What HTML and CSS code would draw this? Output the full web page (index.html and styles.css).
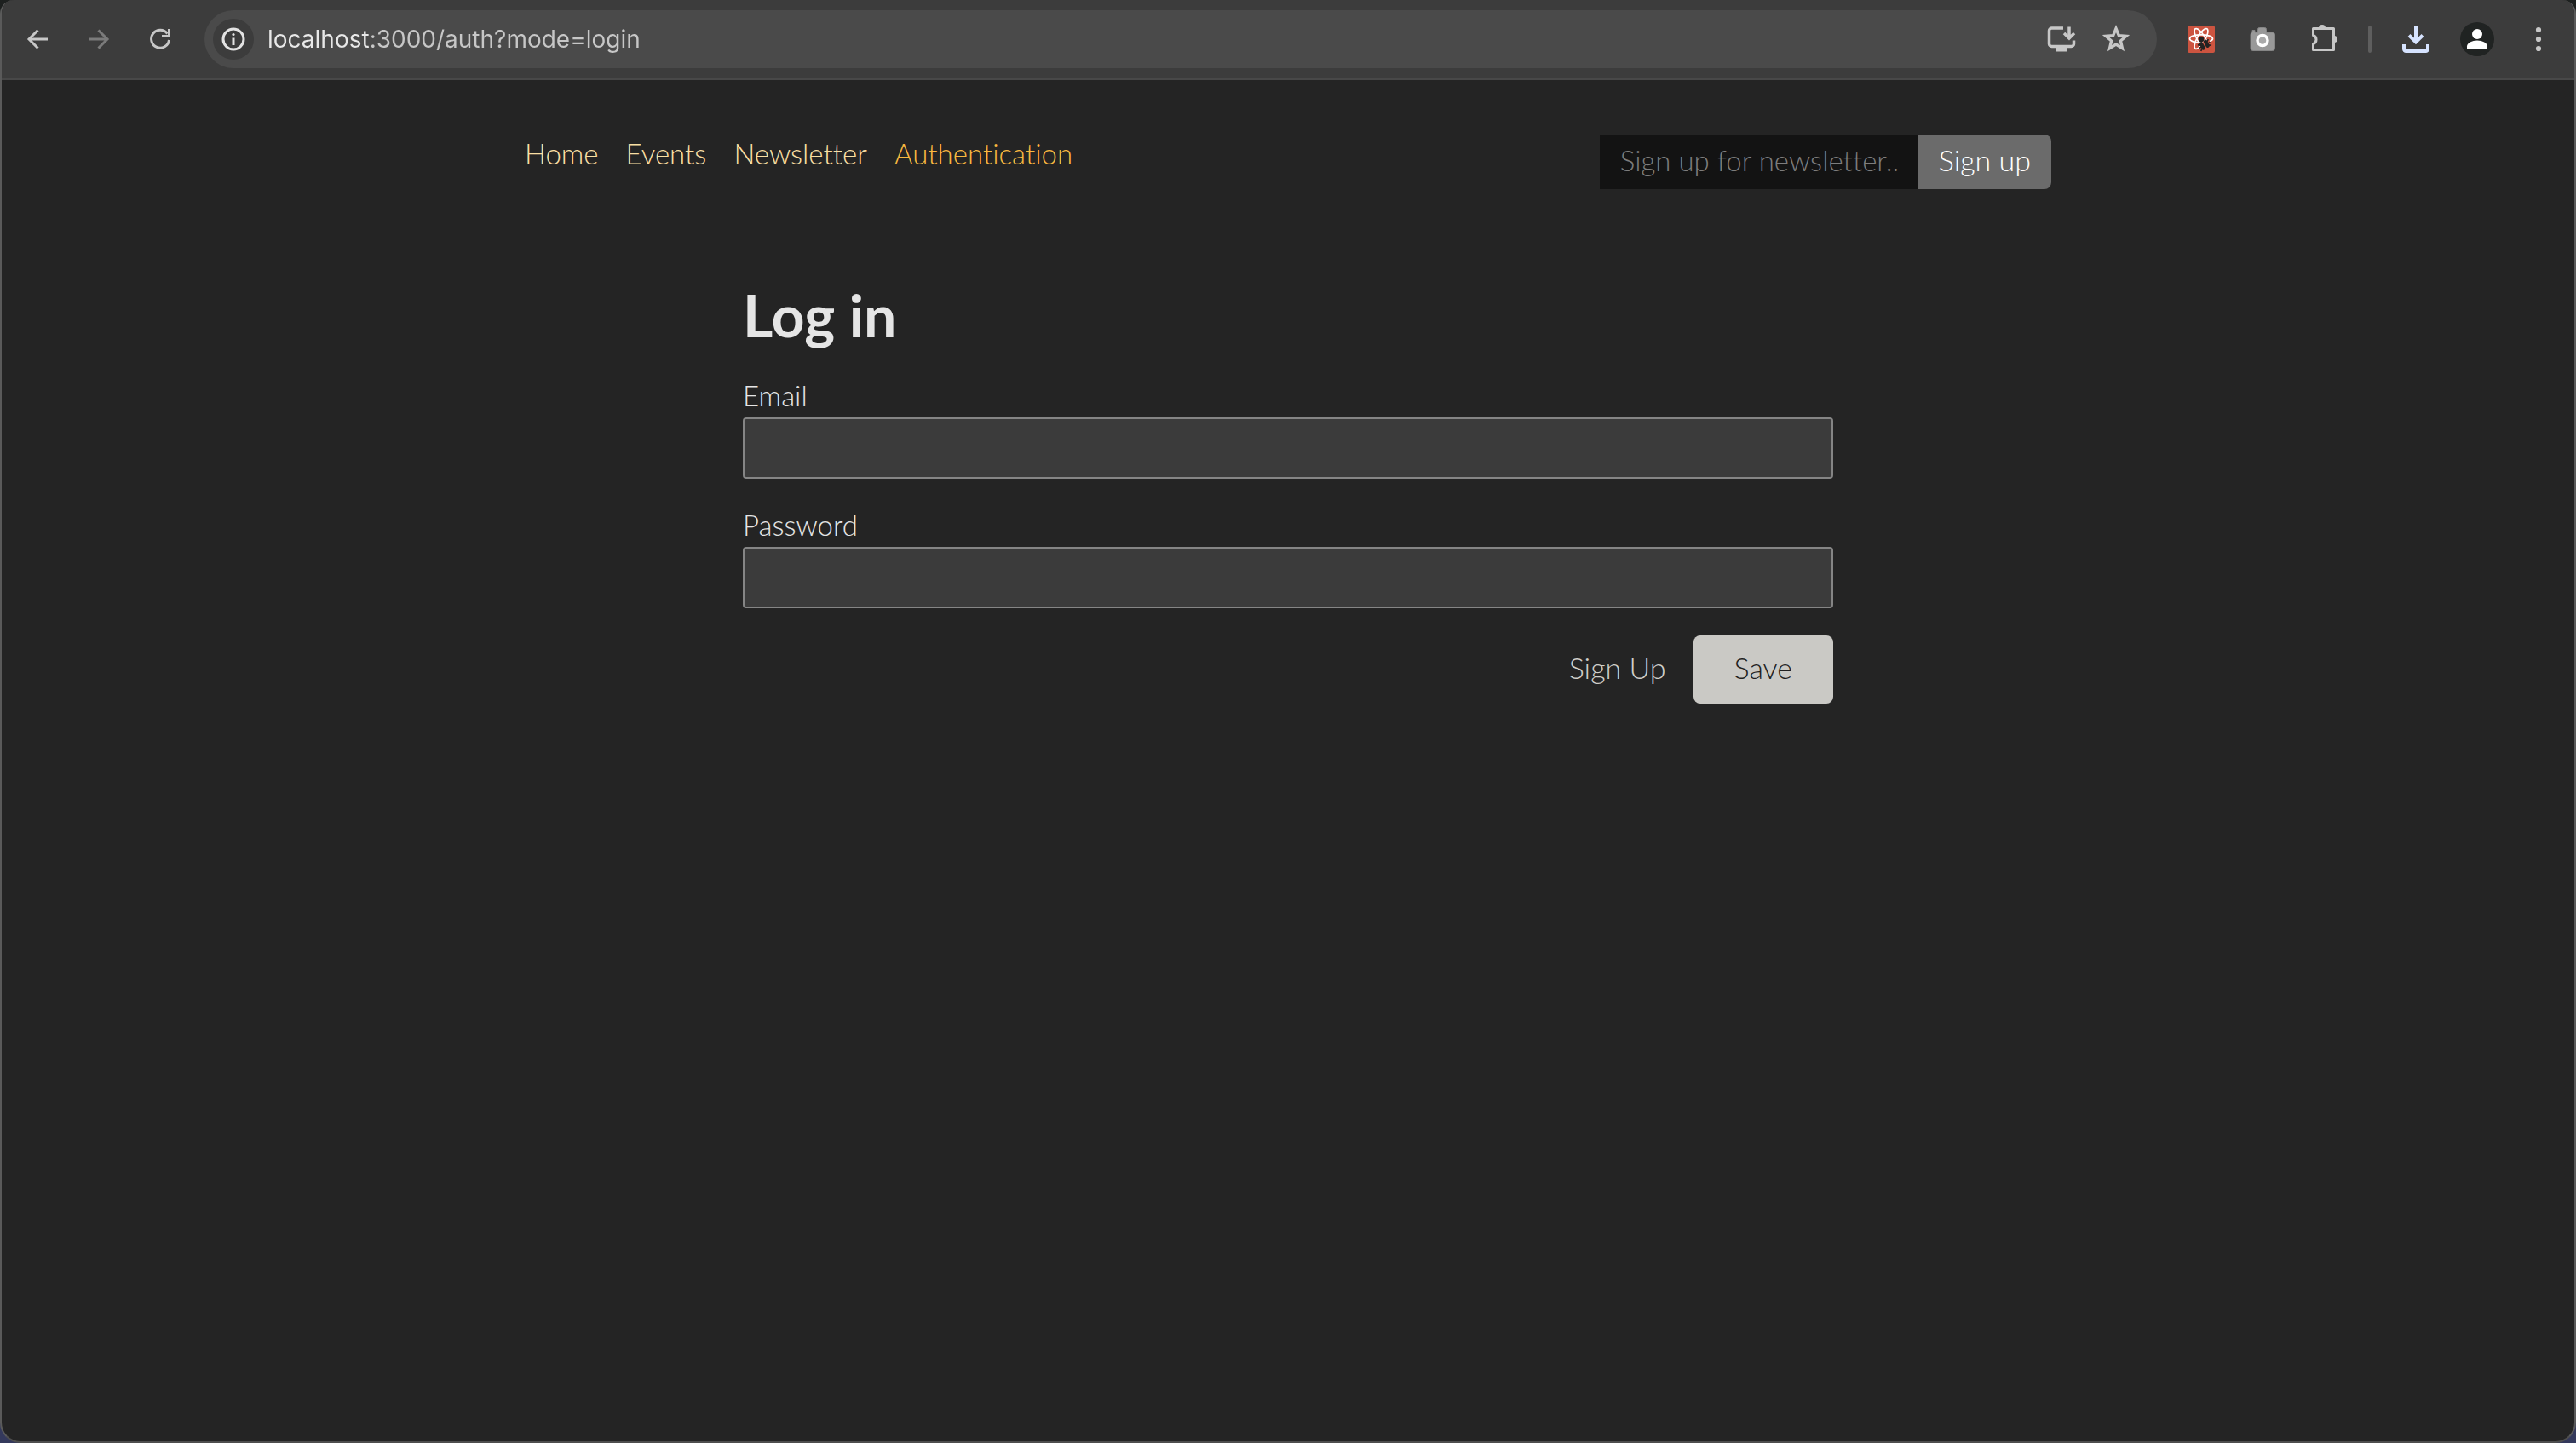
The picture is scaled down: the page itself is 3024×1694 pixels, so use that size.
FILE: index.html
```html
<!DOCTYPE html>
<html lang="en">
<head>
<meta charset="utf-8">
<meta name="viewport" content="width=device-width, initial-scale=1">
<title>Log in</title>
<link rel="stylesheet" href="styles.css">
</head>
<body>
<div class="window">
  <div class="toolbar">
    <button class="tool" type="button" aria-label="Back">
      <svg viewBox="0 0 40 40" class="icon line"><path d="M32 20H10M20.500 9.500L10 20l10.500 10.500"/></svg>
    </button>
    <button class="tool" type="button" aria-label="Forward" disabled>
      <svg viewBox="0 0 40 40" class="icon line"><path d="M8 20h22M19.500 9.500L30 20 19.500 30.500"/></svg>
    </button>
    <button class="tool" type="button" aria-label="Reload">
      <svg viewBox="0 0 40 40" class="icon line"><path d="M30.500 21A10.500 10.500 0 1 1 28.500 13.500"/><path d="M30.500 8v8.500H22" stroke-width="3"/></svg>
    </button>
    <div class="omnibox">
      <button class="site-info" type="button" aria-label="View site information">
        <svg viewBox="0 0 40 40" class="icon bright"><circle cx="20" cy="20" r="12"/><path d="M20 18.500v8.500"/><circle class="solid" cx="20" cy="14.500" r="1.600"/></svg>
      </button>
      <input class="url" type="text" aria-label="Address" spellcheck="false" value="localhost:3000/auth?mode=login">
      <button class="tool" type="button" aria-label="Install app">
        <svg viewBox="0 0 40 40" class="icon line"><path stroke-width="3.500" d="M22 7H8.500a3 3 0 0 0-3 3V25.500a3 3 0 0 0 3 3h23a3 3 0 0 0 3-3v-4M29 5.500V18.500M23 13l6 6 6-6"/><path class="solid" d="M14 29h12v5.500H14z"/></svg>
      </button>
      <button class="tool" type="button" aria-label="Bookmark this tab">
        <svg viewBox="0 0 40 40" class="icon line"><path stroke-width="3.400" stroke-linejoin="miter" d="M20 7.500L23.300 15.600 32 16.300 25.400 22 27.400 30.600 20 26 12.600 30.600 14.600 22 8 16.300 16.700 15.600z"/></svg>
      </button>
    </div>
    <button class="tool" type="button" aria-label="React Developer Tools">
      <svg viewBox="0 0 40 40" class="icon">
        <rect x="4" y="4" width="32" height="32" rx="2" fill="#cc5440"/>
        <g fill="none" stroke="#fff" stroke-width="1.700"><ellipse cx="20" cy="19.500" rx="13.500" ry="4.700"/><ellipse cx="20" cy="19.500" rx="13.500" ry="4.700" transform="rotate(60 20 19.500)"/><ellipse cx="20" cy="19.500" rx="13.500" ry="4.700" transform="rotate(120 20 19.500)"/></g>
        <path d="M20 24l9-3 4 6-5 7-9-1z" fill="#cc5440"/>
        <circle cx="20" cy="20" r="3.200" fill="#222"/>
        <g transform="rotate(-28 24 27)"><rect x="19" y="21.500" width="4.300" height="10" rx="2" fill="#222"/><rect x="24.700" y="21.500" width="4.300" height="10" rx="2" fill="#222"/><path d="M17 23l3 2M16.500 27h3M17 31l3-2M31 23l-3 2M31.500 27h-3M31 31l-3-2" stroke="#222" stroke-width="1.600"/></g>
      </svg>
    </button>
    <button class="tool" type="button" aria-label="Screenshot extension">
      <svg viewBox="0 0 40 40" class="icon">
        <path fill="#999" stroke="#858585" d="M8 12V9.500h3V12h3.500V8.500a2 2 0 0 1 2-2h6a2 2 0 0 1 2 2V12h7a3 3 0 0 1 3 3v15.500a3 3 0 0 1-3 3H9a3 3 0 0 1-3-3V15a3 3 0 0 1 2-3z"/>
        <circle cx="20" cy="21.500" r="6" fill="#aaa" stroke="#fff" stroke-width="3.400"/>
      </svg>
    </button>
    <button class="tool" type="button" aria-label="Extensions">
      <svg viewBox="0 0 40 40" class="icon line"><path d="M7.500 7.500h24v25h-24v-7a5.300 5.300 0 0 0 0-10z" stroke-linejoin="round"/><path class="solid" d="M14 7a4 4 0 0 1 8 0zM32 16a4 4 0 0 1 0 8z"/></svg>
    </button>
    <span class="divider"></span>
    <button class="tool download" type="button" aria-label="Downloads">
      <svg viewBox="0 0 40 40" class="icon heavy"><path d="M20 4v19M12 15.500l8 8 8-8M6 26v5.500a2.500 2.500 0 0 0 2.500 2.500h23a2.500 2.500 0 0 0 2.500-2.500V26"/></svg>
    </button>
    <button class="tool" type="button" aria-label="Profile">
      <svg viewBox="0 0 40 40" class="icon"><circle cx="20" cy="20" r="20" fill="#202322"/><circle cx="20" cy="14" r="6" fill="#fff"/><path fill="#fff" d="M8 32v-3.500c0-4 6-7 12-7s12 3 12 7V32z"/></svg>
    </button>
    <button class="tool" type="button" aria-label="Menu">
      <svg viewBox="0 0 40 40" class="icon"><g fill="#c7c7c7"><circle cx="20" cy="9" r="3.100"/><circle cx="20" cy="20" r="3.100"/><circle cx="20" cy="31" r="3.100"/></g></svg>
    </button>
  </div>

  <div class="page">
    <header class="header">
      <nav class="nav" aria-label="Main">
        <a href="/">Home</a>
        <a href="/events">Events</a>
        <a href="/newsletter">Newsletter</a>
        <a class="active" href="/auth" aria-current="page">Authentication</a>
      </nav>
      <form class="newsletter">
        <input type="email" placeholder="Sign up for newsletter.." aria-label="Sign up for newsletter">
        <button type="submit">Sign up</button>
      </form>
    </header>
    <main>
      <form class="auth">
        <h1>Log in</h1>
        <div class="field">
          <label for="email">Email</label>
          <input id="email" type="email" name="email">
        </div>
        <div class="field">
          <label for="password">Password</label>
          <input id="password" type="password" name="password">
        </div>
        <div class="actions">
          <a href="/auth?mode=signup">Sign Up</a>
          <button type="submit">Save</button>
        </div>
      </form>
    </main>
  </div>
</div>
</body>
</html>
```
FILE: styles.css
```css
* {
  box-sizing: border-box;
}

body {
  margin: 0;
  background: linear-gradient(#1d201f 50%, #34395c 50%);
  color: #e5e5e5;
  font: 300 33px/44px Lato, "Open Sans", sans-serif;
  font-variant-ligatures: none;
}

button,
input {
  margin: 0;
  border: 0;
  font: inherit;
}

button {
  cursor: pointer;
}

a {
  text-decoration: none;
}

.window {
  display: flex;
  flex-direction: column;
  min-height: 100vh;
  overflow: hidden;
  border: 2px solid #5a5a5a;
  border-top: 0;
  border-bottom-color: #4e4e4e;
  border-radius: 16px 16px 24px 24px;
  background: #242424;
}

/* Browser toolbar */
.toolbar {
  display: flex;
  align-items: center;
  gap: 32px;
  padding: 12px 22px;
  border-bottom: 2px solid #484848;
  background: #3c3c3c;
}

.tool,
.site-info {
  display: flex;
  flex: none;
  align-items: center;
  justify-content: center;
  width: 40px;
  height: 40px;
  padding: 0;
  border-radius: 50%;
  background: none;
  color: #c7c7c7;
}

.tool:disabled {
  color: #7b7b7b;
}

.tool.download {
  color: #d6e3ff;
}

.icon {
  width: 40px;
  height: 40px;
}

.line,
.heavy,
.bright {
  fill: none;
  stroke: currentColor;
  stroke-width: 3;
}

.heavy {
  stroke-width: 4;
}

.solid {
  fill: currentColor;
  stroke: none;
}

.omnibox {
  display: flex;
  flex: 1;
  align-items: center;
  gap: 24px;
  min-width: 0;
  height: 68px;
  padding: 0 28px 0 10px;
  border-radius: 34px;
  background: #4a4a4a;
}

.site-info {
  width: 48px;
  height: 48px;
  margin-right: -8px;
  background: #3c3c3c;
  color: #e3e3e3;
}

/* The host is brighter than the rest of the address */
.url {
  flex: 1;
  min-width: 0;
  padding: 0;
  background: linear-gradient(90deg, #e8e8e8 120px, #c7c7c7 120px);
  background-clip: text;
  color: transparent;
  font: 400 28px/40px Inter, Roboto, sans-serif;
}

.divider {
  width: 4px;
  height: 32px;
  border-radius: 2px;
  background: #5e5e5e;
}

/* Page */
.header {
  display: flex;
  justify-content: space-between;
  align-items: flex-start;
  max-width: 1920px;
  margin: 0 auto;
  padding: 64px;
}

.nav {
  display: flex;
  gap: 32px;
}

.nav a {
  color: #f9dfa3;
}

.nav .active {
  color: #f9b840;
}

.newsletter {
  display: flex;
}

.newsletter input {
  width: 374px;
  height: 64px;
  padding: 0 24px 4px;
  border-radius: 0;
  background: #131313;
  color: #fff;
}

.newsletter input::placeholder {
  color: #7d7d7d;
}

.newsletter button {
  height: 64px;
  padding: 0 24px 4px;
  border-radius: 0 8px 8px 0;
  background: #6b6b6b;
  color: #fff;
  font-size: 34px;
}

.auth {
  max-width: 1280px;
  margin: 0 auto;
  padding: 40px 0;
}

.auth h1 {
  margin: 0 0 28px;
  font-size: 68px;
  font-weight: 700;
  line-height: 88px;
}

.field {
  display: flex;
  flex-direction: column;
  gap: 4px;
  margin-bottom: 32px;
}

.field input {
  height: 72px;
  padding: 0 16px;
  border: 2px solid #858585;
  border-radius: 4px;
  background: #3b3b3b;
  color: #e5e5e5;
}

.actions {
  display: flex;
  justify-content: flex-end;
  align-items: center;
  gap: 32px;
  font-size: 34px;
}

.actions a {
  padding-bottom: 4px;
  color: #d0cfca;
}

.actions button {
  height: 80px;
  padding: 0 48px 4px;
  border-radius: 8px;
  background: #cac9c5;
  color: #1f1f1f;
}
```
